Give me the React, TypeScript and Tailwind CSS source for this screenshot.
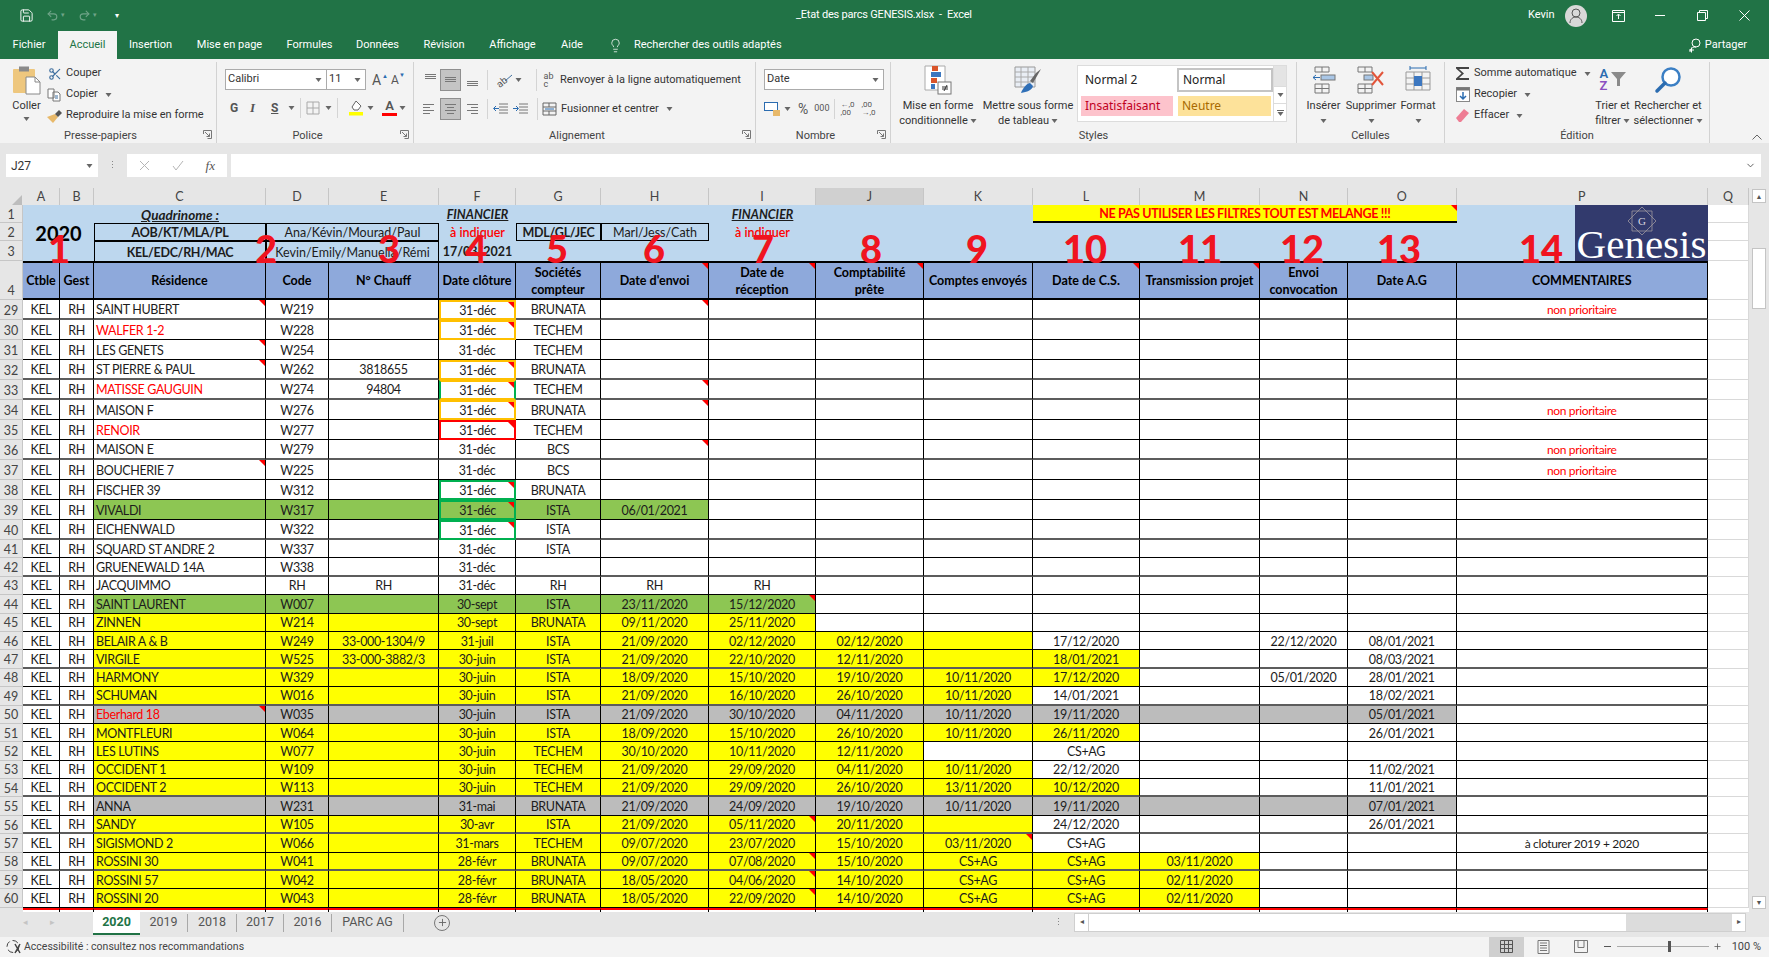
import { ChevronDown, Lightbulb, Plus, Redo2, Save, Scissors, Undo2 } from "lucide-react";
import type { ReactNode } from "react";

const COLS =
  "grid grid-cols-[23px_37px_34px_172px_63px_110px_77px_85px_108px_107px_108px_109px_107px_120px_88px_108.5px_251.5px_41px]";

const LETTERS = ["A", "B", "C", "D", "E", "F", "G", "H", "I", "J", "K", "L", "M", "N", "O", "P", "Q"];

const FILL = { green: "bg-[#8dc653]", yellow: "bg-[#ffff00]", grey: "bg-[#bcbcbc]" };
const FBOX = {
  orange: "border-2 border-[#ffc000]",
  green: "border-2 border-[#00b050]",
  red: "border-2 border-[#ff0000]",
  mixed: "border-2 border-x-[#00b050] border-y-[#ffc000]",
};

type SheetRow = {
  n: number;
  cells: string;
  fill?: keyof typeof FILL;
  to?: number; // dernier index colore dans cells
  red?: boolean;
  notes?: number[];
  box?: keyof typeof FBOX;
};

// colonnes : C D E F G H I J K L M N O P
const ROWS: SheetRow[] = [
  { n: 29, cells: "SAINT HUBERT|W219||31-déc|BRUNATA||||||||| non prioritaire", notes: [0, 3, 5], box: "orange" },
  { n: 30, cells: "WALFER 1-2|W228||31-déc|TECHEM", red: true, notes: [3], box: "orange" },
  { n: 31, cells: "LES GENETS|W254||31-déc|TECHEM", notes: [0] },
  { n: 32, cells: "ST PIERRE & PAUL|W262|3818655|31-déc|BRUNATA", notes: [0, 3], box: "orange" },
  { n: 33, cells: "MATISSE GAUGUIN|W274|94804|31-déc|TECHEM", red: true, notes: [3, 5], box: "mixed" },
  { n: 34, cells: "MAISON F|W276||31-déc|BRUNATA||||||||| non prioritaire", notes: [3, 5], box: "orange" },
  { n: 35, cells: "RENOIR|W277||31-déc|TECHEM", red: true, notes: [3], box: "red" },
  { n: 36, cells: "MAISON E|W279||31-déc|BCS||||||||| non prioritaire", notes: [5] },
  { n: 37, cells: "BOUCHERIE 7|W225||31-déc|BCS||||||||| non prioritaire", notes: [0] },
  { n: 38, cells: "FISCHER 39|W312||31-déc|BRUNATA", notes: [3], box: "green" },
  { n: 39, cells: "VIVALDI|W317||31-déc|ISTA|06/01/2021", fill: "green", to: 5, notes: [3], box: "green" },
  { n: 40, cells: "EICHENWALD|W322||31-déc|ISTA", notes: [3], box: "green" },
  { n: 41, cells: "SQUARD ST ANDRE 2|W337||31-déc|ISTA" },
  { n: 42, cells: "GRUENEWALD 14A|W338||31-déc" },
  { n: 43, cells: "JACQUIMMO|RH|RH|31-déc|RH|RH|RH" },
  { n: 44, cells: "SAINT LAURENT|W007||30-sept|ISTA|23/11/2020|15/12/2020", fill: "green", to: 6, notes: [6] },
  { n: 45, cells: "ZINNEN|W214||30-sept|BRUNATA|09/11/2020|25/11/2020", fill: "yellow", to: 6 },
  { n: 46, cells: "BELAIR A & B|W249|33-000-1304/9|31-juil|ISTA|21/09/2020|02/12/2020|02/12/2020||17/12/2020||22/12/2020|08/01/2021", fill: "yellow", to: 8 },
  { n: 47, cells: "VIRGILE|W525|33-000-3882/3|30-juin|ISTA|21/09/2020|22/10/2020|12/11/2020||18/01/2021|||08/03/2021", fill: "yellow", to: 9 },
  { n: 48, cells: "HARMONY|W329||30-juin|ISTA|18/09/2020|15/10/2020|19/10/2020|10/11/2020|17/12/2020||05/01/2020|28/01/2021", fill: "yellow", to: 9 },
  { n: 49, cells: "SCHUMAN|W016||30-juin|ISTA|21/09/2020|16/10/2020|26/10/2020|10/11/2020|14/01/2021|||18/02/2021", fill: "yellow", to: 8 },
  { n: 50, cells: "Eberhard 18|W035||30-juin|ISTA|21/09/2020|30/10/2020|04/11/2020|10/11/2020|19/11/2020|||05/01/2021", fill: "grey", to: 12, red: true, notes: [0] },
  { n: 51, cells: "MONTFLEURI|W064||30-juin|ISTA|18/09/2020|15/10/2020|26/10/2020|10/11/2020|26/11/2020|||26/01/2021", fill: "yellow", to: 9 },
  { n: 52, cells: "LES LUTINS|W077||30-juin|TECHEM|30/10/2020|10/11/2020|12/11/2020||CS+AG", fill: "yellow", to: 7 },
  { n: 53, cells: "OCCIDENT 1|W109||30-juin|TECHEM|21/09/2020|29/09/2020|04/11/2020|10/11/2020|22/12/2020|||11/02/2021", fill: "yellow", to: 8 },
  { n: 54, cells: "OCCIDENT 2|W113||30-juin|TECHEM|21/09/2020|29/09/2020|26/10/2020|13/11/2020|10/12/2020|||11/01/2021", fill: "yellow", to: 9 },
  { n: 55, cells: "ANNA|W231||31-mai|BRUNATA|21/09/2020|24/09/2020|19/10/2020|10/11/2020|19/11/2020|||07/01/2021", fill: "grey", to: 12 },
  { n: 56, cells: "SANDY|W105||30-avr|ISTA|21/09/2020|05/11/2020|20/11/2020||24/12/2020|||26/01/2021", fill: "yellow", to: 8, notes: [6] },
  { n: 57, cells: "SIGISMOND 2|W066||31-mars|TECHEM|09/07/2020|23/07/2020|15/10/2020|03/11/2020|CS+AG||||à cloturer 2019 + 2020", fill: "yellow", to: 8, notes: [8] },
  { n: 58, cells: "ROSSINI 30|W041||28-févr|BRUNATA|09/07/2020|07/08/2020|15/10/2020|CS+AG|CS+AG|03/11/2020", fill: "yellow", to: 10, notes: [6] },
  { n: 59, cells: "ROSSINI 57|W042||28-févr|BRUNATA|18/05/2020|04/06/2020|14/10/2020|CS+AG|CS+AG|02/11/2020", fill: "yellow", to: 10, notes: [6] },
  { n: 60, cells: "ROSSINI 20|W043||28-févr|BRUNATA|18/05/2020|22/09/2020|14/10/2020|CS+AG|CS+AG|02/11/2020", fill: "yellow", to: 10, notes: [6] },
];

const HEAVY = [29, 32, 33, 36, 40, 42, 47, 49, 54, 56, 58];

const HEADERS: [string, boolean][] = [
  ["Résidence", false],
  ["Code", false],
  ["N° Chauff", false],
  ["Date clôture", false],
  ["Sociétés\ncompteur", false],
  ["Date d'envoi", true],
  ["Date de\nréception", true],
  ["Comptabilité\nprête", true],
  ["Comptes envoyés", false],
  ["Date de C.S.", true],
  ["Transmission projet", true],
  ["Envoi\nconvocation", false],
  ["Date A.G", false],
  ["COMMENTAIRES", false],
];

const BIG_NUMBERS = [
  { label: "1", pos: "left-[59px]" },
  { label: "2", pos: "left-[266px]" },
  { label: "3", pos: "left-[389px]" },
  { label: "4", pos: "left-[476px]" },
  { label: "5", pos: "left-[557px]" },
  { label: "6", pos: "left-[654px]" },
  { label: "7", pos: "left-[763px]" },
  { label: "8", pos: "left-[871px]" },
  { label: "9", pos: "left-[977px]" },
  { label: "10", pos: "left-[1085px]" },
  { label: "11", pos: "left-[1200px]" },
  { label: "12", pos: "left-[1302px]" },
  { label: "13", pos: "left-[1399px]" },
  { label: "14", pos: "left-[1541px]" },
];

function Note() {
  return <span className="absolute right-0 top-0 border-l-[6px] border-t-[6px] border-l-transparent border-t-[#ff0000]" />;
}

function Caret({ className = "" }: { className?: string }) {
  return (
    <svg width="7" height="4" viewBox="0 0 7 4" className={className}>
      <path d="M0.5 0h6L3.5 4z" fill="#666" />
    </svg>
  );
}

function Launcher() {
  return (
    <svg width="9" height="9" viewBox="0 0 9 9" className="absolute bottom-[4px] right-[4px]">
      <path d="M0.5 4V0.5H8.5V8.5H4.5M2 2l4.5 4.5M6.5 3.5v3h-3" fill="none" stroke="#777" />
    </svg>
  );
}

function Group({ width, label, launcher, children }: { width: string; label: string; launcher?: boolean; children: ReactNode }) {
  return (
    <div className={`relative flex h-[81px] shrink-0 flex-col border-r border-[#d2d2d2] ${width}`}>
      <div className="flex h-[66px] min-h-0">{children}</div>
      <div className={`h-[15px] text-center text-[11px] leading-[15px] text-[#444] ${launcher ? "pr-[15px]" : ""}`}>{label}</div>
      {launcher && <Launcher />}
    </div>
  );
}

function LargeButton({ width, icon, lines }: { width: string; icon: ReactNode; lines: string[] }) {
  return (
    <div className={`flex shrink-0 flex-col items-center ${width}`}>
      <div className="flex h-[36px] items-center justify-center">{icon}</div>
      <div className="whitespace-nowrap text-center text-[11px] leading-[15px] text-[#333]">{lines[0]}</div>
      <div className="flex h-[15px] items-center justify-center gap-[2px] whitespace-nowrap text-[11px] leading-[15px] text-[#333]">
        {lines[1]}
        <Caret />
      </div>
    </div>
  );
}

function SmallRow({ icon, text, caret }: { icon: ReactNode; text: string; caret?: boolean }) {
  return (
    <div className="flex h-[21px] items-center gap-[3px] whitespace-nowrap text-[11px] text-[#333]">
      <span className="flex w-[17px] justify-center">{icon}</span>
      {text}
      {caret && <Caret className="ml-[4px]" />}
    </div>
  );
}

function AlignLines({ rows, active }: { rows: [number, number, number][]; active?: boolean }) {
  return (
    <div className={`flex h-[22px] w-[21px] items-center justify-center ${active ? "border border-[#8f8f8f] bg-[#c4c4c4]" : ""}`}>
      <svg width="15" height="16" viewBox="0 0 15 16">
        {rows.map(([x, y, w], i) => (
          <rect key={i} x={x} y={y} width={w} height="1" fill="#777" />
        ))}
      </svg>
    </div>
  );
}

const VSEP = <div className="mx-[5px] h-[20px] w-px bg-[#d4d4d4]" />;

function Ribbon() {
  return (
    <div className="flex h-[84px] items-start bg-[#f3f3f3] pt-[3px] font-['Roboto',sans-serif]">
      <Group width="w-[217px]" label="Presse-papiers" launcher>
        <div className="flex w-[52px] shrink-0 flex-col items-center pl-[1px] pt-[4px]">
          <svg width="30" height="29" viewBox="0 0 30 29">
            <rect x="1" y="3" width="22" height="24" rx="1" fill="#eec77e" />
            <rect x="7" y="0.5" width="10" height="5" fill="#8a8a8a" />
            <path d="M14 11h9l5 5v12H14z" fill="#fff" stroke="#888" />
            <path d="M23 11v5h5" fill="none" stroke="#888" />
          </svg>
          <span className="mt-[3px] text-[11px] leading-[15px] text-[#333]">Coller</span>
          <Caret className="mt-[4px]" />
        </div>
        <div className="-ml-[6px] flex flex-col pt-[1px]">
          <SmallRow icon={<Scissors size={14} className="text-[#3f6f9f]" />} text="Couper" />
          <SmallRow
            icon={
              <svg width="15" height="14" viewBox="0 0 15 14" fill="#fff" stroke="#777">
                <path d="M1 1h6v9H1zM6 4h5l2 2v7H6z" />
                <path d="M8 8h3M8 10h3" stroke="#3f6f9f" />
              </svg>
            }
            text="Copier"
            caret
          />
          <SmallRow
            icon={
              <svg width="15" height="14" viewBox="0 0 15 14">
                <path d="M0 8l8-3 3 3-5 6z" fill="#e8b96a" />
                <path d="M8 5l4-4 3 3-4 4z" fill="#555" />
              </svg>
            }
            text="Reproduire la mise en forme"
          />
        </div>
      </Group>

      <Group width="w-[197px]" label="Police" launcher>
        <div className="flex flex-col pl-[8px] pt-[7px]">
          <div className="flex items-center">
            <div className="flex h-[21px] w-[102px] items-center justify-between border border-[#ababab] bg-white px-[2px] text-[11px] text-[#333]">
              Calibri
              <Caret className="mr-[2px]" />
            </div>
            <div className="flex h-[21px] w-[39px] items-center justify-between border border-l-0 border-[#ababab] bg-white px-[2px] text-[11px] text-[#333]">
              11
              <Caret className="mr-[2px]" />
            </div>
            <span className="relative ml-[6px] w-[16px] text-[14px] leading-none text-[#555]">
              A<span className="absolute right-0 top-0 text-[6px] text-[#2b6cb0]">▲</span>
            </span>
            <span className="relative ml-[3px] w-[14px] text-[12px] leading-none text-[#555]">
              A<span className="absolute right-0 top-[-2px] text-[6px] text-[#2b6cb0]">▼</span>
            </span>
          </div>
          <div className="mt-[7px] flex h-[22px] items-center text-[#555]">
            <span className="ml-[5px] w-[20px] text-[12px] font-bold">G</span>
            <span className="w-[21px] font-['Liberation_Serif',serif] text-[13px] font-bold italic">I</span>
            <span className="w-[14px] text-[12px] font-bold underline">S</span>
            <Caret className="ml-[3px]" />
            {VSEP}
            <svg width="14" height="14" viewBox="0 0 14 14" fill="none" stroke="#a9a9a9">
              <path d="M1 1h12v12H1zM7 1v12M1 7h12" />
            </svg>
            <Caret className="ml-[5px]" />
            {VSEP}
            <svg width="15" height="16" viewBox="0 0 15 16" className="ml-[6px]">
              <path d="M7 1l5 5-3 4H5L3 7z" fill="#fff" stroke="#666" />
              <rect x="0" y="12" width="14" height="3.5" fill="#ffff00" />
            </svg>
            <Caret className="ml-[3px]" />
            <div className="ml-[8px] flex w-[15px] flex-col items-center">
              <span className="text-[13px] font-semibold leading-[12px] text-[#555]">A</span>
              <span className="mt-[1px] h-[3px] w-[15px] bg-[#ff0000]" />
            </div>
            <Caret className="ml-[2px]" />
          </div>
        </div>
      </Group>

      <Group width="w-[342px]" label="Alignement" launcher>
        <div className="flex flex-col pl-[5px] pt-[7px]">
          <div className="flex items-center">
            <AlignLines rows={[[3, 2, 11], [3, 4, 11], [3, 6, 11]]} />
            <AlignLines rows={[[2, 5, 11], [2, 7, 11], [2, 9, 11]]} active />
            <AlignLines rows={[[3, 9, 11], [3, 11, 11], [3, 13, 11]]} />
            {VSEP}
            <svg width="18" height="16" viewBox="0 0 18 16" className="ml-[2px] overflow-visible">
              <text x="1" y="14" transform="rotate(-40 6 10)" fontSize="10" fill="#555">ab</text>
              <path d="M10 9l7-6" stroke="#3f6f9f" />
            </svg>
            <Caret className="ml-[2px]" />
            <div className="ml-[14px] mr-[3px] h-[22px] w-px bg-[#d4d4d4]" />
            <SmallRow
              icon={
                <span className="relative flex flex-col text-[9px] leading-[8px] text-[#555]">
                  ab
                  <span className="text-[#555]">c</span>
                </span>
              }
              text="Renvoyer à la ligne automatiquement"
            />
          </div>
          <div className="mt-[7px] flex items-center">
            <AlignLines rows={[[1, 3, 11], [1, 6, 7], [1, 9, 11], [1, 12, 7]]} />
            <AlignLines rows={[[2, 3, 11], [4, 6, 7], [2, 9, 11], [4, 12, 7]]} active />
            <AlignLines rows={[[3, 3, 11], [7, 6, 7], [3, 9, 11], [7, 12, 7]]} />
            {VSEP}
            <svg width="15" height="12" viewBox="0 0 15 12">
              <path d="M6 1h9M6 4h9M6 7h9M6 10h9" stroke="#777" />
              <path d="M0 5.500h5M3 3l2.500 2.500L3 8" stroke="#2b6cb0" fill="none" transform="rotate(180 3 5.500)" />
            </svg>
            <svg width="15" height="12" viewBox="0 0 15 12" className="ml-[5px]">
              <path d="M6 1h9M6 4h9M6 7h9M6 10h9" stroke="#777" />
              <path d="M0 5.500h5M3 3l2.500 2.500L3 8" stroke="#2b6cb0" fill="none" />
            </svg>
            <div className="ml-[9px] mr-[3px] h-[22px] w-px bg-[#d4d4d4]" />
            <SmallRow
              icon={
                <svg width="15" height="14" viewBox="0 0 15 14" fill="none" stroke="#666">
                  <path d="M1 1h13v12H1zM1 5h13M1 9h13M7 1v4M7 9v4" />
                  <path d="M3 7h9" stroke="#2b6cb0" />
                </svg>
              }
              text="Fusionner et centrer"
              caret
            />
          </div>
        </div>
      </Group>

      <Group width="w-[135px]" label="Nombre" launcher>
        <div className="flex flex-col pl-[8px] pt-[7px]">
          <div className="flex h-[21px] w-[120px] items-center justify-between border border-[#ababab] bg-white px-[2px] text-[11px] text-[#333]">
            Date
            <Caret className="mr-[2px]" />
          </div>
          <div className="mt-[9px] flex items-center text-[#555]">
            <svg width="17" height="15" viewBox="0 0 17 15">
              <rect x="0.500" y="0.500" width="13" height="8" fill="#fff" stroke="#2b6cb0" />
              <rect x="9" y="8" width="7" height="6" fill="#e8b96a" />
            </svg>
            <Caret className="ml-[3px]" />
            <span className="ml-[7px] text-[14px] leading-none">%</span>
            <span className="ml-[6px] text-[9px]">000</span>
            {VSEP}
            <span className="w-[17px] text-[8px] leading-[8px] text-[#555]">
              ←,0
              <br />,00
            </span>
            <span className="ml-[4px] w-[17px] text-[8px] leading-[8px] text-[#555]">
              ,00
              <br />→,0
            </span>
          </div>
        </div>
      </Group>

      <Group width="w-[406px]" label="Styles">
        <LargeButton
          width="w-[94px]"
          lines={["Mise en forme", "conditionnelle"]}
          icon={
            <svg width="28" height="30" viewBox="0 0 28 30">
              <path d="M1 1h20v24H1z" fill="#fff" stroke="#aaa" />
              <rect x="8" y="1" width="6" height="5" fill="#d9552b" />
              <rect x="7" y="7" width="10" height="5" fill="#3c77c0" />
              <rect x="7" y="13" width="6" height="5" fill="#d9552b" />
              <rect x="7" y="19" width="4" height="5" fill="#3c77c0" />
              <rect x="14" y="17" width="13" height="12" fill="#fff" stroke="#777" />
              <path d="M18 22h6M18 24h6M23 20l-3 6" stroke="#333" fill="none" />
            </svg>
          }
        />
        <LargeButton
          width="w-[86px]"
          lines={["Mettre sous forme", "de tableau"]}
          icon={
            <svg width="28" height="28" viewBox="0 0 28 28">
              <path d="M1 1h20v20H1z" fill="#e9eef5" stroke="#999" />
              <path d="M1 6h20M1 11h20M1 16h20M7 1v20M14 1v20" stroke="#aaa" />
              <path d="M22 7l5-4-8 14-3-2z" fill="#666" />
              <path d="M7 27c2-6 7-10 9-10l3 3c-1 4-6 6-12 7z" fill="#2f6fb7" />
            </svg>
          }
        />
        <div className="ml-[6px] mt-[3px] flex h-[57px] w-[210px] border border-[#dcdcdc] bg-white font-['Noto_Sans',sans-serif]">
          <div className="flex flex-1 flex-col pt-[1px] text-[12px] leading-none">
            <div className="flex h-[26px] items-center">
              <span className="ml-[7px] w-[92px] text-[#222]">Normal 2</span>
              <span className="flex h-[24px] w-[96px] items-center border-2 border-[#c4c4c4] px-[4px] text-[#222]">Normal</span>
            </div>
            <div className="mt-[3px] flex items-center">
              <span className="ml-[3px] flex h-[20px] w-[92px] items-center bg-[#fdc3cc] pl-[4px] text-[#c0001e]">Insatisfaisant</span>
              <span className="ml-[5px] flex h-[20px] w-[93px] items-center bg-[#fde29a] pl-[4px] text-[#a86a00]">Neutre</span>
            </div>
          </div>
          <div className="flex w-[13px] flex-col border-l border-[#dcdcdc]">
            <div className="h-[20px] bg-[#e4e4e4]" />
            <div className="flex h-[18px] items-center justify-center border-y border-[#dcdcdc]">
              <Caret />
            </div>
            <div className="flex flex-1 flex-col items-center justify-center">
              <span className="h-px w-[7px] bg-[#666]" />
              <Caret className="mt-[1px]" />
            </div>
          </div>
        </div>
      </Group>

      <Group width="w-[148px]" label="Cellules">
        <LargeButton
          width="w-[47px] ml-[3px]"
          lines={["Insérer", ""]}
          icon={
            <svg width="24" height="28" viewBox="0 0 24 28" fill="none" stroke="#777">
              <path d="M3 1h14v5H3zM10 1v5M3 18h14v9H3zM3 22.500h14M10 18v9" />
              <rect x="9" y="9" width="14" height="5" fill="#a9c6e6" />
              <path d="M1 11.500h7M4 9l-3 2.500L4 14" stroke="#2b6cb0" />
            </svg>
          }
        />
        <LargeButton
          width="w-[48px]"
          lines={["Supprimer", ""]}
          icon={
            <svg width="28" height="28" viewBox="0 0 28 28" fill="none" stroke="#777">
              <path d="M1 1h14v5H1zM8 1v5M1 18h14v9H1zM1 22.500h14M8 18v9" />
              <rect x="7" y="9" width="9" height="5" fill="#a9c6e6" />
              <path d="M15 6l11 13M26 6L15 19" stroke="#e2553a" strokeWidth="2" />
            </svg>
          }
        />
        <LargeButton
          width="w-[46px]"
          lines={["Format", ""]}
          icon={
            <svg width="26" height="30" viewBox="0 0 26 30" fill="none" stroke="#999">
              <path d="M5 3h16M5 1v4M21 1v4" stroke="#2b6cb0" />
              <path d="M1 7h24v18H1zM1 13h24M1 19h24M9 7v18M17 7v18" />
              <rect x="9" y="11" width="8" height="10" fill="#3c77c0" stroke="none" />
            </svg>
          }
        />
      </Group>

      <Group width="w-[265px]" label="Édition">
        <div className="flex w-[147px] shrink-0 flex-col pl-[9px] pt-[1px]">
          <SmallRow
            icon={
              <svg width="15" height="15" viewBox="0 0 15 15">
                <path d="M1 1h13v2H4l5 4.500L4 12h10v2H1v-1.500L6.500 7.500 1 2.500z" fill="#444" />
              </svg>
            }
            text="Somme automatique"
            caret
          />
          <SmallRow
            icon={
              <svg width="14" height="15" viewBox="0 0 14 15">
                <rect x="0.500" y="0.500" width="13" height="14" fill="#fff" stroke="#888" />
                <rect x="0.500" y="0.500" width="13" height="3" fill="#777" />
                <path d="M7 5v7M4 9l3 3 3-3" stroke="#2b6cb0" fill="none" strokeWidth="1.500" />
              </svg>
            }
            text="Recopier"
            caret
          />
          <SmallRow
            icon={
              <svg width="13" height="13" viewBox="0 0 13 13">
                <path d="M0 9l8-9 5 4-8 9H3z" fill="#ee7d94" />
              </svg>
            }
            text="Effacer"
            caret
          />
        </div>
        <LargeButton
          width="w-[41px]"
          lines={["Trier et", "filtrer"]}
          icon={
            <span className="relative flex w-[28px] flex-col pl-[1px] text-[13px] font-semibold leading-[12px]">
              <span className="text-[#2b6cb0]">A</span>
              <span className="text-[#8a4fc0]">Z</span>
              <svg width="15" height="15" viewBox="0 0 15 15" className="absolute left-[12px] top-[4px]">
                <path d="M0 0h15L9 7v7H6V7z" fill="#8a8a8a" />
              </svg>
            </span>
          }
        />
        <LargeButton
          width="w-[70px]"
          lines={["Rechercher et", "sélectionner"]}
          icon={
            <svg width="28" height="28" viewBox="0 0 28 28" fill="none">
              <circle cx="17" cy="11" r="8.500" stroke="#3b7fc4" strokeWidth="2.500" fill="#fff" />
              <path d="M11 17l-8 8" stroke="#2b6cb0" strokeWidth="3.500" strokeLinecap="round" />
            </svg>
          }
        />
      </Group>

      <div className="relative h-[81px] flex-1">
        <svg width="10" height="6" viewBox="0 0 10 6" className="absolute bottom-[3px] right-[7px]" fill="none" stroke="#666">
          <path d="M0.500 5.500L5 1l4.500 4.500" />
        </svg>
      </div>
    </div>
  );
}

function FormulaBar() {
  return (
    <div className="flex h-[45px] items-start bg-[#e6e6e6] pt-[11px] font-['Roboto',sans-serif] text-[12px] text-[#333]">
      <div className="ml-[6px] flex h-[23px] w-[92px] items-center justify-between bg-white pl-[5px] pr-[5px]">
        J27
        <Caret />
      </div>
      <div className="flex w-[29px] flex-col items-center justify-center gap-[2px] pt-[7px]">
        <span className="h-px w-px bg-[#888]" />
        <span className="h-px w-px bg-[#888]" />
        <span className="h-px w-px bg-[#888]" />
      </div>
      <div className="flex h-[23px] w-[100px] items-center justify-between bg-white px-[12px] text-[#aaa]">
        <svg width="11" height="11" viewBox="0 0 11 11" stroke="#b5b5b5" fill="none">
          <path d="M1 1l9 9M10 1l-9 9" />
        </svg>
        <svg width="12" height="11" viewBox="0 0 12 11" stroke="#b5b5b5" fill="none">
          <path d="M1 6l3 4 7-9" />
        </svg>
        <span className="font-['Liberation_Serif',serif] text-[13px] italic text-[#555]">fx</span>
      </div>
      <div className="ml-[4px] flex h-[23px] w-[1530px] items-center justify-end bg-white pr-[5px]">
        <ChevronDown size={11} className="text-[#555]" />
      </div>
    </div>
  );
}

function ColumnHeaders() {
  return (
    <div className={`${COLS} h-[17px] bg-[#e6e6e6] text-[12.500px] leading-[17px] text-[#444]`}>
      <div className="flex items-end justify-end pb-[1px] pr-[1px]">
        <span className="border-b-[11px] border-l-[11px] border-b-[#bdbdbd] border-l-transparent" />
      </div>
      {LETTERS.map((l) => (
        <div
          key={l}
          className={`border-r border-[#c6c6c6] text-center ${l === "J" ? "border-b-2 border-b-[#217346] bg-[#d0d0d0]" : ""}`}
        >
          {l}
        </div>
      ))}
    </div>
  );
}

const ROWHEAD = "flex items-center justify-center border-b border-r border-[#c6c6c6] bg-[#e6e6e6] pt-[2px] text-[12.500px] text-[#444]";

function TopBlock() {
  const box = "flex items-center justify-center whitespace-nowrap border border-black pt-[2px]";
  const plain = "flex items-center justify-center pt-[2px]";
  return (
    <div className={`${COLS} relative grid-rows-[18px_18px_20px_39px] text-[12.500px] leading-[16px] text-[#1c1c1c]`}>
      <div className="col-[2/18] row-[1/4] bg-[#bdd7ee]" />
      <div className={`${ROWHEAD} col-1 row-1`}>1</div>
      <div className={`${ROWHEAD} col-1 row-2`}>2</div>
      <div className={`${ROWHEAD} col-1 row-3`}>3</div>
      <div className={`${ROWHEAD} col-1 row-4 items-end`}>4</div>

      <div className={`${plain} col-[2/4] row-2 text-[20px] font-bold text-black`}>2020</div>
      <div className={`${plain} col-4 row-1 text-[13.500px] font-bold italic underline`}>Quadrinome :</div>
      <div className={`${box} col-4 row-2 font-bold tracking-[-0.3px]`}>AOB/KT/MLA/PL</div>
      <div className={`${box} col-[5/7] row-2`}>Ana/Kévin/Mourad/Paul</div>
      <div className={`${box} col-4 row-3 border-b-0 font-bold tracking-[-0.3px]`}>KEL/EDC/RH/MAC</div>
      <div className={`${box} col-[5/7] row-3 border-b-0`}>Kevin/Emily/Manuella/Rémi</div>
      <div className={`${plain} col-7 row-1 font-bold italic underline`}>FINANCIER</div>
      <div className={`${plain} col-7 row-2 font-semibold text-[#ff0000]`}>à indiquer</div>
      <div className={`${plain} col-7 row-3 font-bold`}>17/03/2021</div>
      <div className={`${box} col-8 row-2 font-bold tracking-[-0.3px]`}>MDL/GL/JEC</div>
      <div className={`${box} col-9 row-2`}>Marl/Jess/Cath</div>
      <div className={`${plain} col-10 row-1 font-bold italic underline`}>FINANCIER</div>
      <div className={`${plain} col-10 row-2 font-semibold text-[#ff0000]`}>à indiquer</div>

      <div className={`${plain} relative col-[13/17] row-1 border-b-2 border-black bg-[#ffff00] font-bold tracking-[-0.35px] text-[#ff0000]`}>
        NE PAS UTILISER LES FILTRES TOUT EST MELANGE !!!
        <Note />
      </div>

      <div className="col-17 row-[1/4] flex justify-end">
        <div className="flex h-full w-[133px] flex-col items-center bg-[#323a6d]">
          <svg width="30" height="30" viewBox="0 0 30 30" className="mt-px shrink-0" fill="none" stroke="#9d97a0" strokeWidth="0.800">
            <path d="M15 1l14 14-14 14L1 15z" />
            <path d="M5 5h20v20H5z" />
            <text x="15" y="19" fontSize="11" textAnchor="middle" fill="#d8d8e0" stroke="none" fontFamily="Liberation Serif">
              G
            </text>
          </svg>
          <span className="-mt-[5px] font-['Liberation_Serif',serif] text-[41px] leading-[26px] text-white">Genesis</span>
        </div>
      </div>

      {[1, 2, 3].map((r) => (
        <div
          key={r}
          className={`col-18 border-b border-r border-[#d9d9d9] bg-white ${r === 1 ? "row-1" : r === 2 ? "row-2" : "row-3"}`}
        />
      ))}

      <div className="col-2 row-4 flex items-center justify-center border-y-2 border-r border-y-black border-r-black bg-[#8ea9db] font-bold text-black">
        Ctble
      </div>
      <div className="col-3 row-4 flex items-center justify-center border-y-2 border-r border-y-black border-r-black bg-[#8ea9db] font-bold text-black">
        Gest
      </div>
      {HEADERS.map(([label, note], i) => (
        <div
          key={label}
          className="relative row-4 flex items-center justify-center whitespace-pre-line border-y-2 border-r border-y-black border-r-black bg-[#8ea9db] text-center font-bold leading-[17px] text-black"
          style={{ gridColumnStart: i + 4 }}
        >
          {label}
          {note && <Note />}
        </div>
      ))}
      <div className="col-18 row-4 border-b border-r border-[#d9d9d9] bg-white" />

      {BIG_NUMBERS.map((b) => (
        <span
          key={b.label}
          className={`absolute top-[43px] -translate-x-1/2 -translate-y-1/2 text-[38px] font-black leading-none text-[#f01420] ${b.pos}`}
        >
          {b.label}
        </span>
      ))}
    </div>
  );
}

function DataRow({ row }: { row: SheetRow }) {
  const cells = row.cells.split("|");
  const height = row.n <= 40 ? "h-[20px]" : "h-[18.400px]";
  const bottom = HEAVY.includes(row.n) ? "border-b-2 border-b-[#5c5c5c]" : "border-b border-b-black";
  return (
    <div className={`${COLS} ${height} text-[12.500px] leading-[14px] tracking-[-0.35px] text-[#1c1c1c]`}>
      <div className={`${ROWHEAD} tracking-normal`}>{row.n}</div>
      <div className={`flex items-center justify-center border-r border-r-black bg-white pt-[2px] ${bottom}`}>KEL</div>
      <div className={`flex items-center justify-center border-r border-r-black bg-white pt-[2px] ${bottom}`}>RH</div>
      {Array.from({ length: 14 }, (_, i) => {
        const text = (cells[i] ?? "").trim();
        const filled = row.fill && i <= (row.to ?? -1);
        const isBox = i === 3 && row.box;
        return (
          <div
            key={i}
            className={`relative flex items-center overflow-hidden whitespace-nowrap pt-[2px] ${i === 0 ? "justify-start pl-[2px]" : "justify-center"} ${
              isBox ? FBOX[row.box!] : `border-r border-r-black ${bottom}`
            } ${filled ? FILL[row.fill!] : "bg-white"} ${i === 0 && row.red ? "text-[#ff0000]" : ""} ${
              i === 13 ? `text-[12px] ${text === "non prioritaire" ? "text-[#ff0000]" : ""}` : ""
            }`}
          >
            {text}
            {row.notes?.includes(i) && <Note />}
          </div>
        );
      })}
      <div className="border-b border-r border-[#d9d9d9] bg-white" />
    </div>
  );
}

function SheetTabs() {
  const tabs = [
    { label: "2019", width: "w-[48px]" },
    { label: "2018", width: "w-[49px]" },
    { label: "2017", width: "w-[47px]" },
    { label: "2016", width: "w-[48px]" },
    { label: "PARC AG", width: "w-[72px]" },
  ];
  return (
    <div className="flex h-[25px] items-start bg-[#e6e6e6] font-['Roboto',sans-serif] text-[12.500px] text-[#555]">
      <div className="flex h-[22px] w-[93px] items-center gap-[22px] pl-[23px] text-[#c4c4c4]">
        <span className="text-[9px]">◂</span>
        <span className="text-[9px]">▸</span>
      </div>
      <div className="flex h-[23px] w-[47px] items-center justify-center border-b-2 border-[#217346] bg-white font-bold text-[#217346]">
        2020
      </div>
      {tabs.map((t) => (
        <div key={t.label} className={`mt-[2px] flex h-[18px] items-center justify-center border-r border-[#a8a8a8] ${t.width}`}>
          {t.label}
        </div>
      ))}
      <div className="ml-[30px] mt-[3px] flex h-[16px] w-[16px] items-center justify-center rounded-full border border-[#777]">
        <Plus size={11} className="text-[#666]" />
      </div>
      <div className="ml-[608px] mt-[6px] flex flex-col gap-[2px]">
        <span className="h-px w-px bg-[#888]" />
        <span className="h-px w-px bg-[#888]" />
        <span className="h-px w-px bg-[#888]" />
      </div>
      <div className="ml-[15px] mt-[1px] flex h-[19px] w-[672px] border border-[#cfcfcf] bg-[#dcdcdc]">
        <div className="flex w-[14px] items-center justify-center border-r border-[#cfcfcf] bg-white text-[8px] text-[#555]">◂</div>
        <div className="w-[537px] bg-white" />
        <div className="flex-1" />
        <div className="flex w-[13px] items-center justify-center bg-white text-[8px] text-[#555]">▸</div>
      </div>
    </div>
  );
}

function StatusBar() {
  return (
    <div className="flex h-[20px] items-center bg-[#f3f3f3] font-['Roboto',sans-serif] text-[10.500px] text-[#444]">
      <svg width="16" height="15" viewBox="0 0 16 15" fill="none" stroke="#444" className="ml-[6px]">
        <circle cx="7" cy="7.500" r="6" strokeDasharray="6 3" />
        <path d="M9 5l5 9M14 5l-5 9" strokeWidth="1.500" />
      </svg>
      <span className="ml-[2px]">Accessibilité : consultez nos recommandations</span>
      <div className="ml-auto flex h-full w-[35px] items-center justify-center bg-[#cfcfcf]">
        <svg width="13" height="13" viewBox="0 0 13 13" fill="none" stroke="#555">
          <path d="M0.500 0.500h12v12h-12zM0.500 4.500h12M0.500 8.500h12M4.500 0.500v12M8.500 0.500v12" />
        </svg>
      </div>
      <svg width="13" height="14" viewBox="0 0 13 14" fill="none" stroke="#777" className="ml-[13px]">
        <path d="M1 0.500h11v13H1zM3 3h7M3 5.500h7M3 8h7M3 10.500h7" />
      </svg>
      <svg width="14" height="13" viewBox="0 0 14 13" fill="none" stroke="#777" className="ml-[24px]">
        <path d="M0.500 0.500h13v12h-13zM4 0.500v7h6v-7" />
      </svg>
      <span className="ml-[16px] h-px w-[7px] bg-[#555]" />
      <div className="relative ml-[6px] flex h-[11px] w-[92px] items-center">
        <span className="h-px w-full bg-[#aaa]" />
        <span className="absolute left-[51px] h-[11px] w-[3px] bg-[#555]" />
      </div>
      <Plus size={9} className="ml-[4px] text-[#555]" />
      <span className="ml-[10px] mr-[8px] text-[11px]">100 %</span>
    </div>
  );
}

export default function App() {
  return (
    <div className="flex h-[957px] w-[1769px] flex-col overflow-hidden bg-[#e6e6e6] font-['Lato',sans-serif]">
      {/* barre de titre */}
      <div className="flex h-[31px] items-center bg-[#217346] font-['Roboto',sans-serif] text-[11px] text-white">
        <Save size={15} className="ml-[19px]" strokeWidth={1.500} />
        <Undo2 size={13} className="ml-[12px] text-[#6fa488]" />
        <span className="ml-[2px] text-[7px] text-[#6fa488]">▾</span>
        <Redo2 size={13} className="ml-[13px] text-[#6fa488]" />
        <span className="ml-[2px] text-[7px] text-[#6fa488]">▾</span>
        <span className="ml-[18px] text-[8px]">▾</span>
        <span className="ml-[677px] w-[732px] whitespace-pre tracking-[-0.2px]">_Etat des parcs GENESIS.xlsx  -  Excel</span>
        <span className="w-[27px]">Kevin</span>
        <span className="ml-[10px] flex h-[22px] w-[22px] items-center justify-center rounded-full bg-[#d8d8d8]">
          <svg width="14" height="16" viewBox="0 0 14 16" fill="none" stroke="#555">
            <circle cx="7" cy="5" r="4" />
            <path d="M1 15c0-4 3-6 6-6s6 2 6 6" />
          </svg>
        </span>
        <svg width="13" height="12" viewBox="0 0 13 12" fill="none" stroke="#fff" className="ml-[25px]">
          <path d="M0.500 0.500h12v11h-12zM0.500 2.500h12M6.500 9V4.500M4.500 6l2-2 2 2" />
        </svg>
        <span className="ml-[30px] h-px w-[10px] bg-white" />
        <svg width="11" height="11" viewBox="0 0 11 11" fill="none" stroke="#fff" className="ml-[32px]">
          <path d="M0.500 2.500h8v8h-8zM2.500 2.500v-2h8v8h-2" />
        </svg>
        <svg width="11" height="11" viewBox="0 0 11 11" fill="none" stroke="#fff" className="ml-[31px]">
          <path d="M0.500 0.500l10 10M10.500 0.500l-10 10" />
        </svg>
      </div>

      {/* onglets du ruban */}
      <div className="flex h-[28px] bg-[#217346] font-['Roboto',sans-serif] text-[11px] leading-[28px] text-white">
        <span className="w-[58px] text-center">Fichier</span>
        <span className="w-[59px] bg-[#f3f3f3] text-center text-[#217346]">Accueil</span>
        <span className="w-[67px] text-center">Insertion</span>
        <span className="w-[91px] text-center">Mise en page</span>
        <span className="w-[69px] text-center">Formules</span>
        <span className="w-[67px] text-center">Données</span>
        <span className="w-[66px] text-center">Révision</span>
        <span className="w-[71px] text-center">Affichage</span>
        <span className="w-[48px] text-center">Aide</span>
        <span className="flex w-[38px] items-center justify-center">
          <Lightbulb size={15} strokeWidth={1.200} />
        </span>
        <span>Rechercher des outils adaptés</span>
        <span className="ml-auto mr-[22px] flex items-center gap-[2px]">
          <svg width="15" height="15" viewBox="0 0 15 15" fill="none" stroke="#fff">
            <circle cx="8" cy="5" r="4" />
            <path d="M2 14c0-3 2-5 6-5M1 12h5M3.500 9.500v5" />
          </svg>
          Partager
        </span>
      </div>

      <Ribbon />
      <FormulaBar />

      <div className="flex">
        <div className="w-[1749px]">
          <ColumnHeaders />
          <TopBlock />
          {ROWS.map((r) => (
            <DataRow key={r.n} row={r} />
          ))}
          {/* liseré rouge sous la ligne 60 */}
          <div className={`${COLS} h-[4px]`}>
            <div className="bg-[#e6e6e6]" />
            {LETTERS.map((l) => (
              <div key={l} className={l === "Q" ? "bg-white" : "border-r border-t-2 border-r-black border-t-[#ff0000] bg-white"} />
            ))}
          </div>
        </div>
        <div className="flex w-[20px] flex-col items-center bg-[#e6e6e6] pt-[1px]">
          <div className="flex h-[14px] w-[14px] items-center justify-center border border-[#c4c4c4] bg-white text-[7px] text-[#555]">▲</div>
          <div className="mt-[45px] h-[61px] w-[14px] border border-[#c4c4c4] bg-white" />
          <div className="flex-1" />
          <div className="mb-[3px] flex h-[13px] w-[14px] items-center justify-center border border-[#c4c4c4] bg-white text-[7px] text-[#555]">▼</div>
        </div>
      </div>

      <SheetTabs />
      <StatusBar />
    </div>
  );
}
